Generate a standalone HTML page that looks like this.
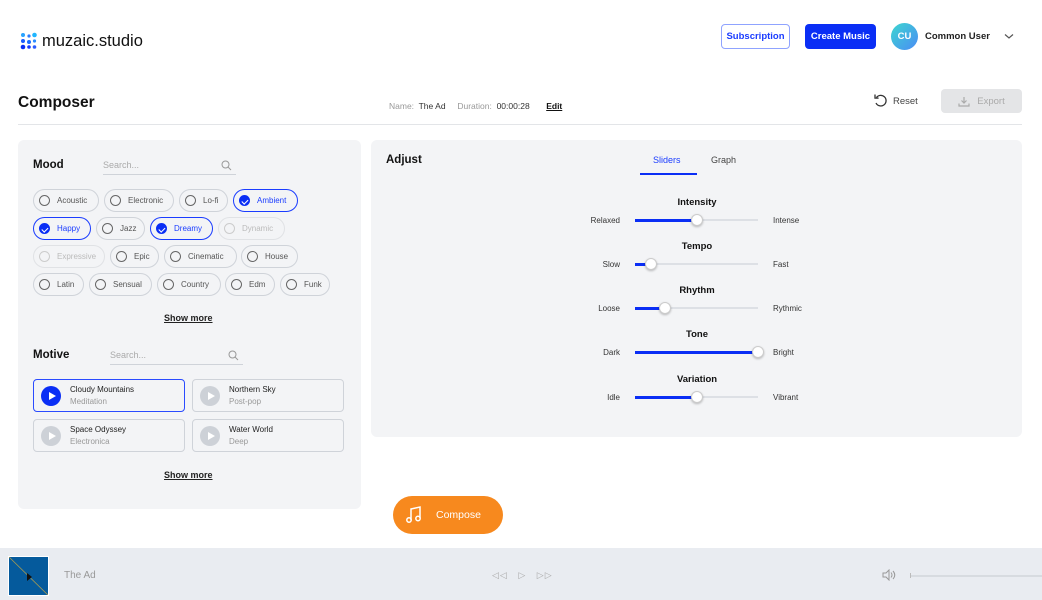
<!DOCTYPE html>
<html><head><meta charset="utf-8"><style>
*{box-sizing:border-box;margin:0;padding:0}
body{width:1042px;height:600px;position:relative;background:#fff;font-family:"Liberation Sans",sans-serif;color:#111;overflow:hidden}
.a{position:absolute}
.btn{position:absolute;border-radius:4px;font-size:10px;font-weight:bold;display:flex;align-items:center;justify-content:center}
.panel{position:absolute;background:#f3f4f6;border-radius:6px}
.chip{position:absolute;height:23px;border:1px solid #cfd3d9;border-radius:12px;font-size:8px;color:#555;display:flex;align-items:center;padding-left:5px;background:#f3f4f6}
.chip i{width:11px;height:11px;border:1.3px solid #666;border-radius:50%;margin-right:7px;display:inline-block;flex:none}
.chip.on{border-color:#1a3cff;color:#1a3cff;border-width:1.3px}
.chip.on i{background:#0a2ef5;border-color:#0a2ef5;position:relative}
.chip.on i:after{content:"";position:absolute;left:3px;top:1.5px;width:2.5px;height:5px;border:solid #fff;border-width:0 1.2px 1.2px 0;transform:rotate(45deg)}
.chip.dis{color:#bbb;border-color:#e0e2e5}
.chip.dis i{border-color:#ccc}
.card{position:absolute;width:152px;height:33px;border:1px solid #cfd3d9;border-radius:4px;background:#f3f4f6}
.card.on{border-color:#2a4bff;border-width:1.3px}
.card .pl{position:absolute;left:7px;top:6px;width:20px;height:20px;border-radius:50%;background:#cdd1d7}
.card.on .pl{background:#0a2ef5}
.card .pl:after{content:"";position:absolute;left:8px;top:5.5px;border-left:7px solid #fff;border-top:4.5px solid transparent;border-bottom:4.5px solid transparent}
.card .t{position:absolute;left:36px;top:5px;font-size:8px;color:#222}
.card .s{position:absolute;left:36px;top:17px;font-size:8px;color:#999}
.sl{position:absolute;left:590px;width:230px;font-size:8px}
.sl .h{position:absolute;width:100%;text-align:center;left:-8px;font-weight:bold;font-size:9.5px;color:#111}
.sl .l{position:absolute;right:200px;top:19px;color:#333;white-space:nowrap}
.sl .r{position:absolute;left:183px;top:19px;color:#333}
.tr{position:absolute;left:45px;top:22px;width:123px;height:2px;background:#dde0e5}
.tr b{position:absolute;left:0;top:-0.5px;height:3px;background:#0a2ef5}
.tr u{position:absolute;top:-5px;width:12px;height:12px;border-radius:50%;background:#fff;border:1px solid #ccc;box-shadow:0 1px 2px rgba(0,0,0,.25)}
</style></head><body>
<svg class="a" style="left:20px;top:32px" width="18" height="18" viewBox="0 0 18 18">
<circle cx="3" cy="3" r="2" fill="#2aa4ff"/><circle cx="9" cy="4" r="1.6" fill="#2a7bff"/><circle cx="14.5" cy="3" r="2.3" fill="#1fb6ff"/>
<circle cx="3" cy="9" r="2" fill="#1a5cff"/><circle cx="9" cy="10" r="2" fill="#1a6cff"/><circle cx="14.5" cy="9" r="1.6" fill="#2a8bff"/>
<circle cx="3" cy="15" r="2.3" fill="#0a2ef5"/><circle cx="9" cy="15" r="1.8" fill="#1538ff"/><circle cx="14.5" cy="15" r="1.8" fill="#2a5cff"/></svg>
<div class="a" style="left:42px;top:32px;font-size:16.5px;color:#111">muzaic.studio</div>
<div class="btn" style="left:721px;top:24px;width:69px;height:25px;border:1px solid #8fa3ff;color:#1a3cff;font-size:9.5px">Subscription</div>
<div class="btn" style="left:805px;top:24px;width:71px;height:25px;background:#0a2ef5;color:#fff;font-size:9.5px">Create Music</div>
<div class="a" style="left:891px;top:23px;width:27px;height:27px;border-radius:50%;background:linear-gradient(135deg,#3dd6d0,#4a8cf5);color:#fff;font-size:9.5px;font-weight:bold;text-align:center;line-height:27px">CU</div>
<div class="a" style="left:925px;top:31px;font-size:9.5px;font-weight:bold;color:#222">Common User</div>
<svg class="a" style="left:1004px;top:33px" width="10" height="7"><path d="M1 1.5l4 3.5 4-3.5" stroke="#555" stroke-width="1.2" fill="none"/></svg>

<div class="a" style="left:18px;top:94px;font-size:15.5px;font-weight:bold">Composer</div>
<div class="a" style="left:389px;top:101px;font-size:8.5px;color:#999">Name:&nbsp; <span style="color:#333">The Ad</span>&nbsp;&nbsp;&nbsp;&nbsp; Duration:&nbsp; <span style="color:#333">00:00:28</span>&nbsp;&nbsp;&nbsp;&nbsp;&nbsp;&nbsp; <span style="color:#111;font-weight:bold;text-decoration:underline">Edit</span></div>
<svg class="a" style="left:873px;top:93px" width="16" height="15" viewBox="0 0 16 15"><path d="M3.5 4.5A5.3 5.3 0 1 1 3 10" stroke="#333" stroke-width="1.3" fill="none"/><path d="M2 1.5v3.6h3.6" stroke="#333" stroke-width="1.3" fill="none"/></svg>
<div class="a" style="left:893px;top:96px;font-size:9.5px;color:#444">Reset</div>
<div class="btn" style="left:941px;top:89px;width:81px;height:24px;background:#e4e5e7;color:#aaa;font-weight:normal;font-size:9.5px"><svg width="12" height="11" style="margin-right:7px"><path d="M6 1v6M3.5 4.5L6 7l2.5-2.5M1 7.5v2.5h10V7.5" stroke="#aaa" stroke-width="1.2" fill="none"/></svg>Export</div>
<div class="a" style="left:18px;top:124px;width:1004px;height:1px;background:#e3e5e8"></div>

<div class="panel" style="left:18px;top:140px;width:343px;height:369px"></div>
<div class="a" style="left:33px;top:159px;font-size:11.5px;font-weight:bold">Mood</div>
<div class="a" style="left:103px;top:160px;font-size:9px;color:#aaa">Search...</div>
<div class="a" style="left:103px;top:174px;width:133px;height:1px;background:#cfd3d9"></div>
<svg class="a" style="left:221px;top:160px" width="11" height="11"><circle cx="4.5" cy="4.5" r="3.5" stroke="#999" fill="none"/><path d="M7 7l3 3" stroke="#999"/></svg>

<div class="chip" style="left:33px;top:189px;width:66px"><i></i>Acoustic</div>
<div class="chip" style="left:104px;top:189px;width:70px"><i></i>Electronic</div>
<div class="chip" style="left:179px;top:189px;width:49px"><i></i>Lo-fi</div>
<div class="chip on" style="left:233px;top:189px;width:65px"><i></i>Ambient</div>
<div class="chip on" style="left:33px;top:217px;width:58px"><i></i>Happy</div>
<div class="chip" style="left:96px;top:217px;width:49px"><i></i>Jazz</div>
<div class="chip on" style="left:150px;top:217px;width:63px"><i></i>Dreamy</div>
<div class="chip dis" style="left:218px;top:217px;width:67px"><i></i>Dynamic</div>
<div class="chip dis" style="left:33px;top:245px;width:72px"><i></i>Expressive</div>
<div class="chip" style="left:110px;top:245px;width:49px"><i></i>Epic</div>
<div class="chip" style="left:164px;top:245px;width:73px"><i></i>Cinematic</div>
<div class="chip" style="left:241px;top:245px;width:57px"><i></i>House</div>
<div class="chip" style="left:33px;top:273px;width:51px"><i></i>Latin</div>
<div class="chip" style="left:89px;top:273px;width:63px"><i></i>Sensual</div>
<div class="chip" style="left:157px;top:273px;width:64px"><i></i>Country</div>
<div class="chip" style="left:225px;top:273px;width:50px"><i></i>Edm</div>
<div class="chip" style="left:280px;top:273px;width:50px"><i></i>Funk</div>
<div class="a" style="left:164px;top:313px;font-size:9px;font-weight:bold;text-decoration:underline;color:#222">Show more</div>

<div class="a" style="left:33px;top:349px;font-size:11.5px;font-weight:bold">Motive</div>
<div class="a" style="left:110px;top:350px;font-size:9px;color:#aaa">Search...</div>
<div class="a" style="left:110px;top:364px;width:133px;height:1px;background:#cfd3d9"></div>
<svg class="a" style="left:228px;top:350px" width="11" height="11"><circle cx="4.5" cy="4.5" r="3.5" stroke="#999" fill="none"/><path d="M7 7l3 3" stroke="#999"/></svg>
<div class="card on" style="left:33px;top:379px"><div class="pl"></div><div class="t">Cloudy Mountains</div><div class="s">Meditation</div></div>
<div class="card" style="left:192px;top:379px"><div class="pl"></div><div class="t">Northern Sky</div><div class="s">Post-pop</div></div>
<div class="card" style="left:33px;top:419px"><div class="pl"></div><div class="t">Space Odyssey</div><div class="s">Electronica</div></div>
<div class="card" style="left:192px;top:419px"><div class="pl"></div><div class="t">Water World</div><div class="s">Deep</div></div>
<div class="a" style="left:164px;top:470px;font-size:9px;font-weight:bold;text-decoration:underline;color:#222">Show more</div>

<div class="panel" style="left:371px;top:140px;width:651px;height:297px"></div>
<div class="a" style="left:386px;top:154px;font-size:11.5px;font-weight:bold">Adjust</div>
<div class="a" style="left:653px;top:155px;font-size:9px;color:#1a3cff">Sliders</div>
<div class="a" style="left:711px;top:155px;font-size:9px;color:#444">Graph</div>
<div class="a" style="left:640px;top:173px;width:57px;height:2px;background:#0a2ef5"></div>

<div class="sl" style="top:197px"><div class="h">Intensity</div><div class="l">Relaxed</div><div class="tr"><b style="width:62px"></b><u style="left:56px"></u></div><div class="r">Intense</div></div>
<div class="sl" style="top:241px"><div class="h">Tempo</div><div class="l">Slow</div><div class="tr"><b style="width:16px"></b><u style="left:10px"></u></div><div class="r">Fast</div></div>
<div class="sl" style="top:285px"><div class="h">Rhythm</div><div class="l">Loose</div><div class="tr"><b style="width:30px"></b><u style="left:24px"></u></div><div class="r">Rythmic</div></div>
<div class="sl" style="top:329px"><div class="h">Tone</div><div class="l">Dark</div><div class="tr"><b style="width:123px"></b><u style="left:117px"></u></div><div class="r">Bright</div></div>
<div class="sl" style="top:374px"><div class="h">Variation</div><div class="l">Idle</div><div class="tr"><b style="width:62px"></b><u style="left:56px"></u></div><div class="r">Vibrant</div></div>

<div class="a" style="left:393px;top:496px;width:110px;height:38px;border-radius:19px;background:#f7891e"></div>
<svg class="a" style="left:406px;top:506px" width="16" height="18" viewBox="0 0 16 18"><path d="M5 14V3l9-2v11" stroke="#fff" stroke-width="1.5" fill="none"/><circle cx="3" cy="14" r="2.2" stroke="#fff" stroke-width="1.5" fill="none"/><circle cx="12" cy="12.5" r="2.2" stroke="#fff" stroke-width="1.5" fill="none"/></svg>
<div class="a" style="left:436px;top:509px;font-size:10.5px;color:#fff">Compose</div>

<div class="a" style="left:0;top:548px;width:1042px;height:52px;background:#e9ecf1"></div>
<div class="a" style="left:8px;top:556px;width:41px;height:40px;background:#055a9c;border:1px solid #fff;overflow:hidden"><svg width="41" height="40"><path d="M0 0L41 40" stroke="#a89b50" stroke-width="0.8"/><path d="M18 16v8l5-4z" fill="#111"/></svg></div>
<div class="a" style="left:64px;top:570px;font-size:10px;color:#999">The Ad</div>
<div class="a" style="left:492px;top:570px;font-size:9px;color:#aaa;letter-spacing:1px">◁◁&nbsp;&nbsp;&nbsp;▷&nbsp;&nbsp;&nbsp;▷▷</div>
<svg class="a" style="left:882px;top:569px" width="14" height="12"><path d="M1 4h3l3-3v10L4 8H1z" stroke="#999" fill="none"/><path d="M9 3.5q2 2.5 0 5M11 2q3.5 4 0 8" stroke="#999" fill="none"/></svg>
<div class="a" style="left:910px;top:575px;width:132px;height:2px;background:#d7dbe0"></div>
<div class="a" style="left:910px;top:573px;width:1px;height:5px;background:#bbb"></div>
</body></html>
